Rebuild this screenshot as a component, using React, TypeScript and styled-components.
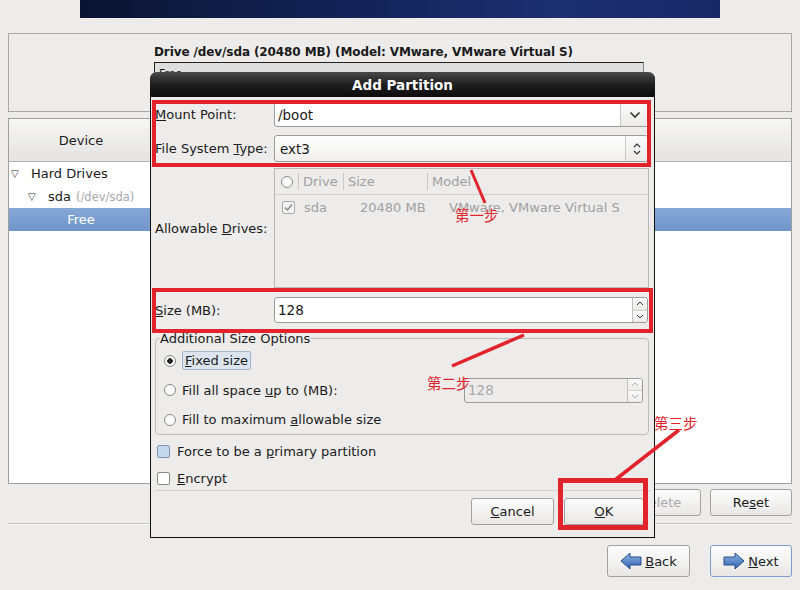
import React from 'react';
import styled, { createGlobalStyle } from 'styled-components';

const GlobalStyle = createGlobalStyle`
  html, body {
    margin: 0;
    padding: 0;
    background: #edeceb;
  }
  body {
    font-family: "DejaVu Sans", "Liberation Sans", sans-serif;
    font-size: 13px;
    color: #1a1a1a;
  }
`;

const Page = styled.div`
  position: relative;
  width: 800px;
  height: 590px;
  overflow: hidden;
  background: #edeceb;
  display: flex;
  flex-direction: column;
`;

const Banner = styled.div`
  margin-left: 80px;
  width: 640px;
  height: 18px;
  background: linear-gradient(90deg, #0a1431 0%, #14245a 45%, #1c2f70 75%, #172866 100%);
`;

const DrivePanel = styled.div`
  margin: 15px 8px 0;
  height: 79px;
  border: 1px solid #a8a8a8;
  padding: 11px 0 0 145px;
  box-sizing: border-box;
`;

const DriveTitle = styled.div`
  font-weight: bold;
  font-size: 12px;
  letter-spacing: -0.1px;
`;

const DriveBar = styled.div`
  margin-top: 3px;
  width: 490px;
  height: 30px;
  border: 1px solid #222;
  border-right-color: #888;
  background: #dedede;
  font-size: 11px;
  padding: 4px 4px 0;
  box-sizing: border-box;
`;

const TreePanel = styled.div`
  margin: 6px 8px 0;
  height: 364px;
  border: 1px solid #a0a0a0;
  background: #fff;
  display: flex;
  flex-direction: column;
`;

const TreeHeader = styled.div`
  height: 42px;
  display: grid;
  grid-template-columns: 145px 1fr;
  background: linear-gradient(#f6f6f5, #e4e3e2);
  border-bottom: 1px solid #b4b4b4;
`;

const HeaderCell = styled.div`
  display: flex;
  align-items: center;
  justify-content: center;
  border-right: 1px solid #c4c4c4;
  &:last-child { border-right: none; }
`;

const TreeRow = styled.div<{ $depth: number; $selected?: boolean }>`
  height: 23px;
  display: flex;
  align-items: center;
  padding-left: ${p => 2 + p.$depth * 17}px;
  color: ${p => (p.$selected ? '#fff' : '#1a1a1a')};
  background: ${p => (p.$selected ? 'linear-gradient(#86a8d6, #6f95c9)' : 'transparent')};
`;

const FreeLabel = styled.div`
  width: 140px;
  text-align: center;
`;

const Expander = styled.span`
  width: 20px;
  font-size: 10px;
  color: #333;
`;

const Dim = styled.span`
  color: #a8a8a8;
  font-size: 11.5px;
  margin-left: 5px;
`;

const ActionRow = styled.div`
  margin: 5px 8px 0;
  display: flex;
  justify-content: flex-end;
  gap: 9px;
`;

const Button = styled.button<{ $w?: number; $h?: number; $focus?: boolean }>`
  width: ${p => p.$w ?? 82}px;
  height: ${p => p.$h ?? 27}px;
  font-family: inherit;
  font-size: 13px;
  color: #1a1a1a;
  border: 1px solid ${p => (p.$focus ? '#7c9ccb' : '#a2a2a2')};
  border-radius: 3px;
  background: linear-gradient(#fdfdfd, #e8e7e6);
  display: flex;
  align-items: center;
  justify-content: center;
  gap: 3px;
  padding: 0;
  &:disabled { color: #aaa; }
`;

const Separator = styled.div`
  margin: 7px 8px 0;
  height: 1px;
  background: #c4c4c4;
  border-bottom: 1px solid #fafafa;
`;

const NavRow = styled.div`
  margin: 20px 8px 0;
  display: flex;
  justify-content: flex-end;
  gap: 20px;
`;

/* dialog */

const Dialog = styled.div`
  position: absolute;
  left: 150px;
  top: 72px;
  width: 505px;
  height: 466px;
  box-sizing: border-box;
  border: 1px solid #111;
  border-top: none;
  border-radius: 7px 7px 0 0;
  background: #edeceb;
  display: flex;
  flex-direction: column;
`;

const TitleBar = styled.div`
  height: 25px;
  margin: 0 -1px;
  border-radius: 7px 7px 0 0;
  background: linear-gradient(#4a4a4a, #1e1e1e 50%, #0c0c0c);
  color: #fff;
  font-weight: bold;
  font-size: 13.5px;
  display: flex;
  align-items: center;
  justify-content: center;
  padding-top: 1px;
  box-sizing: border-box;
`;

const DialogBody = styled.div`
  flex: 1;
  padding: 5px 4px 0 4px;
  display: flex;
  flex-direction: column;
`;

const FormRow = styled.div<{ $h: number; $mt?: number }>`
  height: ${p => p.$h}px;
  margin-top: ${p => p.$mt ?? 0}px;
  display: grid;
  grid-template-columns: 119px 1fr;
  align-items: center;
`;

const Combo = styled.div<{ $button?: boolean }>`
  height: 100%;
  margin-right: ${p => (p.$button ? 2 : 0)}px;
  border: 1px solid #9c9c9c;
  border-radius: 3px;
  background: ${p => (p.$button ? 'linear-gradient(#ffffff, #f0efee)' : '#fff')};
  display: flex;
  align-items: center;
  box-sizing: border-box;
  overflow: hidden;
`;

const ComboText = styled.div<{ $pad?: number }>`
  flex: 1;
  padding-left: ${p => p.$pad ?? 3}px;
  font-size: 13.5px;
`;

const ComboButton = styled.div<{ $w: number }>`
  width: ${p => p.$w}px;
  height: 100%;
  border-left: 1px solid #c8c8c8;
  display: flex;
  align-items: center;
  justify-content: center;
  background: linear-gradient(#fbfbfb, #ecebea);
`;

const DriveList = styled.div`
  height: 100%;
  border: 1px solid #b8b8b8;
  box-sizing: border-box;
  margin-right: 1px;
  color: #a0a0a0;
  display: flex;
  flex-direction: column;
`;

const ListHeader = styled.div`
  height: 25px;
  border-bottom: 1px solid #d0d0d0;
  display: grid;
  grid-template-columns: 24px 45px 84px 1fr;
  align-items: center;
`;

const ListHeadCell = styled.div<{ $center?: boolean }>`
  height: 17px;
  display: flex;
  align-items: center;
  justify-content: ${p => (p.$center ? 'center' : 'flex-start')};
  padding-left: ${p => (p.$center ? 0 : 4)}px;
  border-right: 1px solid #c8c8c8;
  &:last-child { border-right: none; }
`;

const ListRow = styled.div`
  height: 24px;
  display: grid;
  grid-template-columns: 24px 56px 89px 1fr;
  align-items: center;
`;

const Cell = styled.div<{ $center?: boolean }>`
  display: flex;
  justify-content: ${p => (p.$center ? 'center' : 'flex-start')};
  padding-left: ${p => (p.$center ? 2 : 5)}px;
`;

const Box = styled.span<{ $fill?: string; $border?: string }>`
  display: inline-flex;
  align-items: center;
  justify-content: center;
  width: 11px;
  height: 11px;
  border: 1px solid ${p => p.$border ?? '#8a8a8a'};
  border-radius: 2px;
  background: ${p => p.$fill ?? '#fff'};
  flex-shrink: 0;
`;

const Spin = styled.div<{ $disabled?: boolean; $w?: number; $h?: number }>`
  height: ${p => (p.$h ? `${p.$h}px` : '100%')};
  width: ${p => (p.$w ? `${p.$w}px` : 'auto')};
  border: 1px solid #9c9c9c;
  border-radius: 3px;
  background: ${p => (p.$disabled ? '#edeceb' : '#fff')};
  color: ${p => (p.$disabled ? '#a8a8a8' : '#1a1a1a')};
  display: flex;
  align-items: center;
  box-sizing: border-box;
  margin-right: 2px;
  overflow: hidden;
`;

const SpinArrows = styled.div`
  width: 14px;
  height: 100%;
  border-left: 1px solid #c0c0c0;
  display: flex;
  flex-direction: column;
`;

const SpinHalf = styled.div`
  flex: 1;
  display: flex;
  align-items: center;
  justify-content: center;
  background: linear-gradient(#fbfbfb, #ecebea);
  &:first-child { border-bottom: 1px solid #d0d0d0; }
`;

const SizeOptions = styled.fieldset`
  margin: 8px 1px 0 0;
  box-sizing: border-box;
  border: 1px solid #bcbcbc;
  border-radius: 4px;
  padding: 0 3px 0 8px;
  display: flex;
  flex-direction: column;
`;

const Legend = styled.legend`
  padding: 0;
  margin-left: -4px;
  font-size: 13px;
`;

const RadioRow = styled.div<{ $h: number }>`
  height: ${p => p.$h}px;
  display: flex;
  align-items: center;
  gap: 6px;
`;

const Radio = styled.span<{ $on?: boolean }>`
  width: 12px;
  height: 12px;
  box-sizing: border-box;
  border: 1px solid #8a8a8a;
  border-radius: 50%;
  background: ${p => (p.$on ? 'radial-gradient(circle, #222 0 2.5px, #fbfbfb 3px)' : '#fbfbfb')};
  flex-shrink: 0;
`;

const FocusLabel = styled.span`
  padding: 1px 2px;
  border: 1px solid #a4b6cc;
  border-radius: 2px;
  background: #dce5ef;
`;

const Grow = styled.div`
  flex: 1;
`;

const CheckRow = styled.div<{ $mt: number }>`
  margin-top: ${p => p.$mt}px;
  height: 18px;
  padding-left: 2px;
  display: flex;
  align-items: center;
  gap: 7px;
`;

const DialogRule = styled.div`
  margin: 3px 0 0;
  height: 1px;
  background: #cfcfcf;
`;

const DialogButtons = styled.div`
  margin-top: 7px;
  padding-right: 6px;
  display: flex;
  justify-content: flex-end;
  gap: 10px;
`;

const Overlay = styled.svg`
  position: absolute;
  left: 0;
  top: 0;
  pointer-events: none;
  font-family: "Noto Sans CJK SC", sans-serif;
`;

const Chevron = () => (
  <svg width="12" height="8" viewBox="0 0 12 8">
    <path d="M1.5 1.5 L6 6 L10.5 1.5" fill="none" stroke="#333" strokeWidth="1.6" />
  </svg>
);

const UpDown = () => (
  <svg width="8" height="14" viewBox="0 0 8 14">
    <path d="M1 5 L4 2 L7 5 M1 9 L4 12 L7 9" fill="none" stroke="#333" strokeWidth="1.2" />
  </svg>
);

const Tiny = ({ up, color }: { up: boolean; color: string }) => (
  <svg width="8" height="5" viewBox="0 0 8 5">
    <path d={up ? 'M1 4 L4 1 L7 4' : 'M1 1 L4 4 L7 1'} fill="none" stroke={color} strokeWidth="1" />
  </svg>
);

const Tick = () => (
  <svg width="9" height="9" viewBox="0 0 9 9">
    <path d="M1 4.5 L3.5 7 L8 1.5" fill="none" stroke="#8a8a8a" strokeWidth="1.5" />
  </svg>
);

const Arrow = ({ dir }: { dir: 'left' | 'right' }) => (
  <svg width="22" height="18" viewBox="0 0 22 18">
    <defs>
      <linearGradient id={`ag-${dir}`} x1="0" y1="0" x2="0" y2="1">
        <stop offset="0" stopColor="#8fb4e4" />
        <stop offset="1" stopColor="#2d62b0" />
      </linearGradient>
    </defs>
    <path
      d={dir === 'left'
        ? 'M1 9 L10 1 L10 5 L21 5 L21 13 L10 13 L10 17 Z'
        : 'M21 9 L12 1 L12 5 L1 5 L1 13 L12 13 L12 17 Z'}
      fill={`url(#ag-${dir})`}
      stroke="#2a4f8a"
      strokeWidth="1"
      strokeLinejoin="round"
    />
  </svg>
);

const App: React.FC = () => {
  return (
    <>
      <GlobalStyle />
      <Page>
        <Banner />
        <DrivePanel>
          <DriveTitle>Drive /dev/sda (20480 MB) (Model: VMware, VMware Virtual S)</DriveTitle>
          <DriveBar>Free</DriveBar>
        </DrivePanel>

        <TreePanel>
          <TreeHeader>
            <HeaderCell>Device</HeaderCell>
            <HeaderCell />
          </TreeHeader>
          <TreeRow $depth={0}><Expander>▽</Expander>Hard Drives</TreeRow>
          <TreeRow $depth={1}><Expander>▽</Expander>sda<Dim>(/dev/sda)</Dim></TreeRow>
          <TreeRow $depth={0} $selected><FreeLabel>Free</FreeLabel></TreeRow>
        </TreePanel>

        <ActionRow>
          <Button disabled><span>Delete</span></Button>
          <Button><span>Re<u>s</u>et</span></Button>
        </ActionRow>
        <Separator />
        <NavRow>
          <Button $w={83} $h={32}><Arrow dir="left" /><span><u>B</u>ack</span></Button>
          <Button $w={82} $h={32} $focus><Arrow dir="right" /><span><u>N</u>ext</span></Button>
        </NavRow>

        <Dialog>
          <TitleBar>Add Partition</TitleBar>
          <DialogBody>
            <FormRow $h={25}>
              <span><u>M</u>ount Point:</span>
              <Combo>
                <ComboText>/boot</ComboText>
                <ComboButton $w={28}><Chevron /></ComboButton>
              </Combo>
            </FormRow>
            <FormRow $h={27} $mt={8}>
              <span>File System <u>T</u>ype:</span>
              <Combo $button>
                <ComboText $pad={5}>ext3</ComboText>
                <ComboButton $w={21}><UpDown /></ComboButton>
              </Combo>
            </FormRow>
            <FormRow $h={120} $mt={6}>
              <span>Allowable <u>D</u>rives:</span>
              <DriveList>
                <ListHeader>
                  <ListHeadCell $center><Radio /></ListHeadCell>
                  <ListHeadCell>Drive</ListHeadCell>
                  <ListHeadCell>Size</ListHeadCell>
                  <ListHeadCell>Model</ListHeadCell>
                </ListHeader>
                <ListRow>
                  <Cell $center><Box $fill="#f4f4f4" $border="#a8a8a8"><Tick /></Box></Cell>
                  <Cell>sda</Cell>
                  <Cell>20480 MB</Cell>
                  <Cell>VMware, VMware Virtual S</Cell>
                </ListRow>
              </DriveList>
            </FormRow>
            <FormRow $h={26} $mt={9}>
              <span><u>S</u>ize (MB):</span>
              <Spin>
                <ComboText>128</ComboText>
                <SpinArrows>
                  <SpinHalf><Tiny up color="#333" /></SpinHalf>
                  <SpinHalf><Tiny up={false} color="#333" /></SpinHalf>
                </SpinArrows>
              </Spin>
            </FormRow>

            <SizeOptions>
              <Legend>Additional Size Options</Legend>
              <RadioRow $h={29}>
                <Radio $on />
                <FocusLabel><u>F</u>ixed size</FocusLabel>
              </RadioRow>
              <RadioRow $h={30}>
                <Radio />
                <span>Fill all space <u>u</u>p to (MB):</span>
                <Grow />
                <Spin $disabled $w={179} $h={25}>
                  <ComboText>128</ComboText>
                  <SpinArrows>
                    <SpinHalf><Tiny up color="#aaa" /></SpinHalf>
                    <SpinHalf><Tiny up={false} color="#aaa" /></SpinHalf>
                  </SpinArrows>
                </Spin>
              </RadioRow>
              <RadioRow $h={29}>
                <Radio />
                <span>Fill to maximum <u>a</u>llowable size</span>
              </RadioRow>
            </SizeOptions>

            <CheckRow $mt={7}>
              <Box $fill="#c6d8ee" $border="#7d95b4" />
              <span>Force to be a <u>p</u>rimary partition</span>
            </CheckRow>
            <CheckRow $mt={9}>
              <Box />
              <span><u>E</u>ncrypt</span>
            </CheckRow>
            <DialogRule />
            <DialogButtons>
              <Button $w={83}><span><u>C</u>ancel</span></Button>
              <Button $w={80}><span><u>O</u>K</span></Button>
            </DialogButtons>
          </DialogBody>
        </Dialog>

        <Overlay width="800" height="590" viewBox="0 0 800 590">
          <g fill="none" stroke="#e3232b">
            <rect x="154" y="102" width="495" height="63" strokeWidth="4" />
            <rect x="154" y="290" width="497" height="41" strokeWidth="4" />
            <rect x="560.5" y="480.5" width="85" height="47" strokeWidth="5" />
            <line x1="471" y1="170" x2="485" y2="203" strokeWidth="3" />
            <line x1="524" y1="335" x2="452" y2="366" strokeWidth="3.5" />
            <line x1="679" y1="430" x2="615" y2="480" strokeWidth="3.5" />
          </g>
          <g fill="#e3232b" fontSize="14.5">
            <text x="455" y="221">第一步</text>
            <text x="427" y="389">第二步</text>
            <text x="654" y="429">第三步</text>
          </g>
        </Overlay>
      </Page>
    </>
  );
};

export default App;
